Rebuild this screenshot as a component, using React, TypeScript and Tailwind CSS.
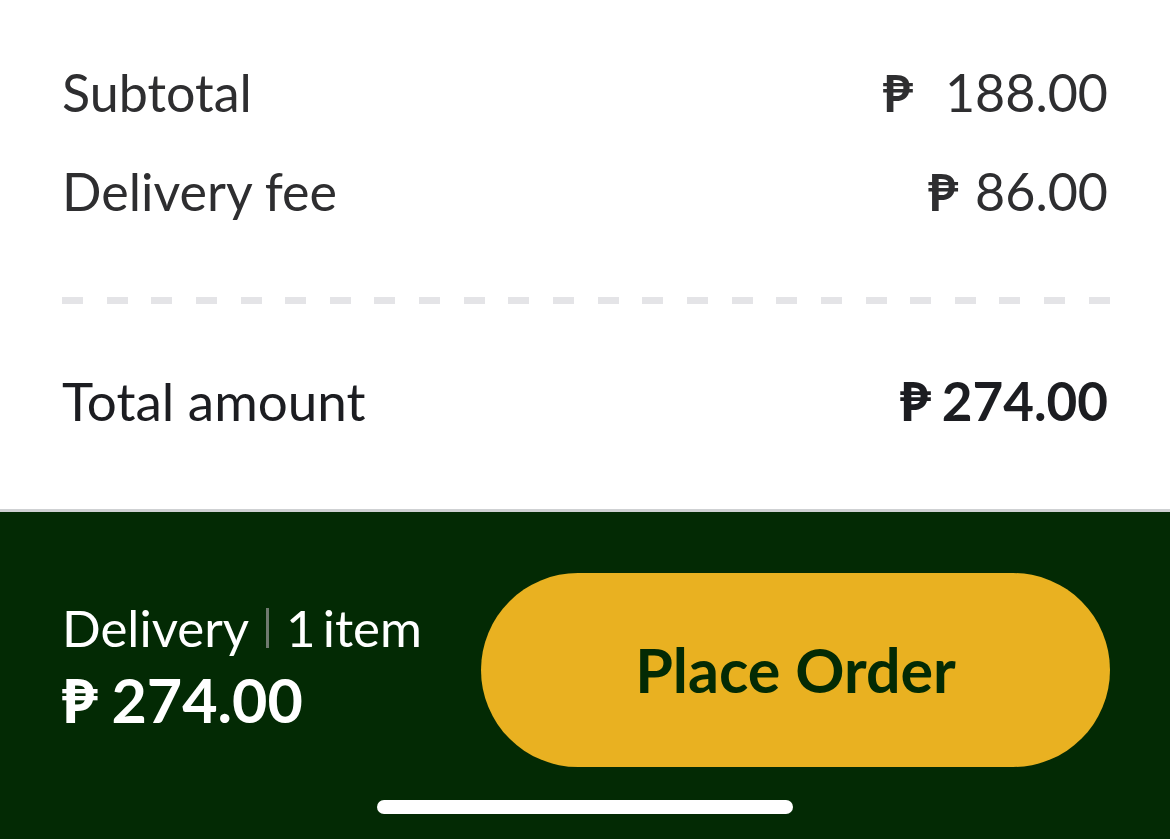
import React from 'react';

const FONT = { fontFamily: 'Lato, "Noto Sans", "DejaVu Sans", sans-serif' };

function Peso({ className = '' }: { className?: string }) {
    return <span className={className}>₱</span>;
}

export default function App() {
    const dashes = Array.from({ length: 24 });

    return (
        <div className="w-[1170px] h-[839px] bg-white flex flex-col overflow-hidden" style={FONT}>
            {/* Summary */}
            <section className="pt-[62px] pb-[78px] px-[62px] text-[52px] leading-[60px]">
                <div className="flex justify-between text-[#2e2e30]">
                    <span>Subtotal</span>
                    <span className="flex">
                        <Peso className="mr-[32px] font-bold" />
                        <span>188.00</span>
                    </span>
                </div>
                <div className="flex justify-between text-[#2e2e30] mt-[39px]">
                    <span>Delivery fee</span>
                    <span className="flex">
                        <Peso className="mr-[17px] font-bold" />
                        <span>86.00</span>
                    </span>
                </div>

                {/* Divider */}
                <div className="mt-[76px] flex justify-between -mr-[2px]">
                    {dashes.map((_, i) => (
                        <div key={i} className="w-[21px] h-[7px] bg-[#e4e4e7]" />
                    ))}
                </div>

                <div className="flex justify-between text-[#1c1d21] mt-[67px] text-[53px]">
                    <span>Total amount</span>
                    <span className="flex font-bold">
                        <Peso className="mr-[11px] font-black" />
                        <span>274.00</span>
                    </span>
                </div>
            </section>

            {/* Checkout bar */}
            <section className="flex-1 bg-[#032a04] border-t-[3px] border-[#cfd1d3] flex flex-col">
                <div className="flex items-start pl-[62px] pr-[60px] pt-[61px]">
                    <div className="mt-[25px] text-white">
                        <div className="flex items-center text-[51px] leading-[60px]">
                            <span>Delivery</span>
                            <span className="mx-[17px] w-[3px] h-[40px] bg-[#6f7a6f]" />
                            <span className="[word-spacing:-6px]">1 item</span>
                        </div>
                        <div className="flex text-[61px] leading-[60px] font-bold mt-[12px]">
                            <Peso className="mr-[14px] font-black" />
                            <span>274.00</span>
                        </div>
                    </div>
                    <button className="ml-auto w-[629px] h-[194px] rounded-full bg-[#e9b121] text-[#032a04] text-[61px] font-bold flex items-center justify-center">
                        Place Order
                    </button>
                </div>
                <div className="mt-[33px] flex justify-center">
                    <div className="w-[416px] h-[14px] rounded-full bg-white" />
                </div>
            </section>
        </div>
    );
}
